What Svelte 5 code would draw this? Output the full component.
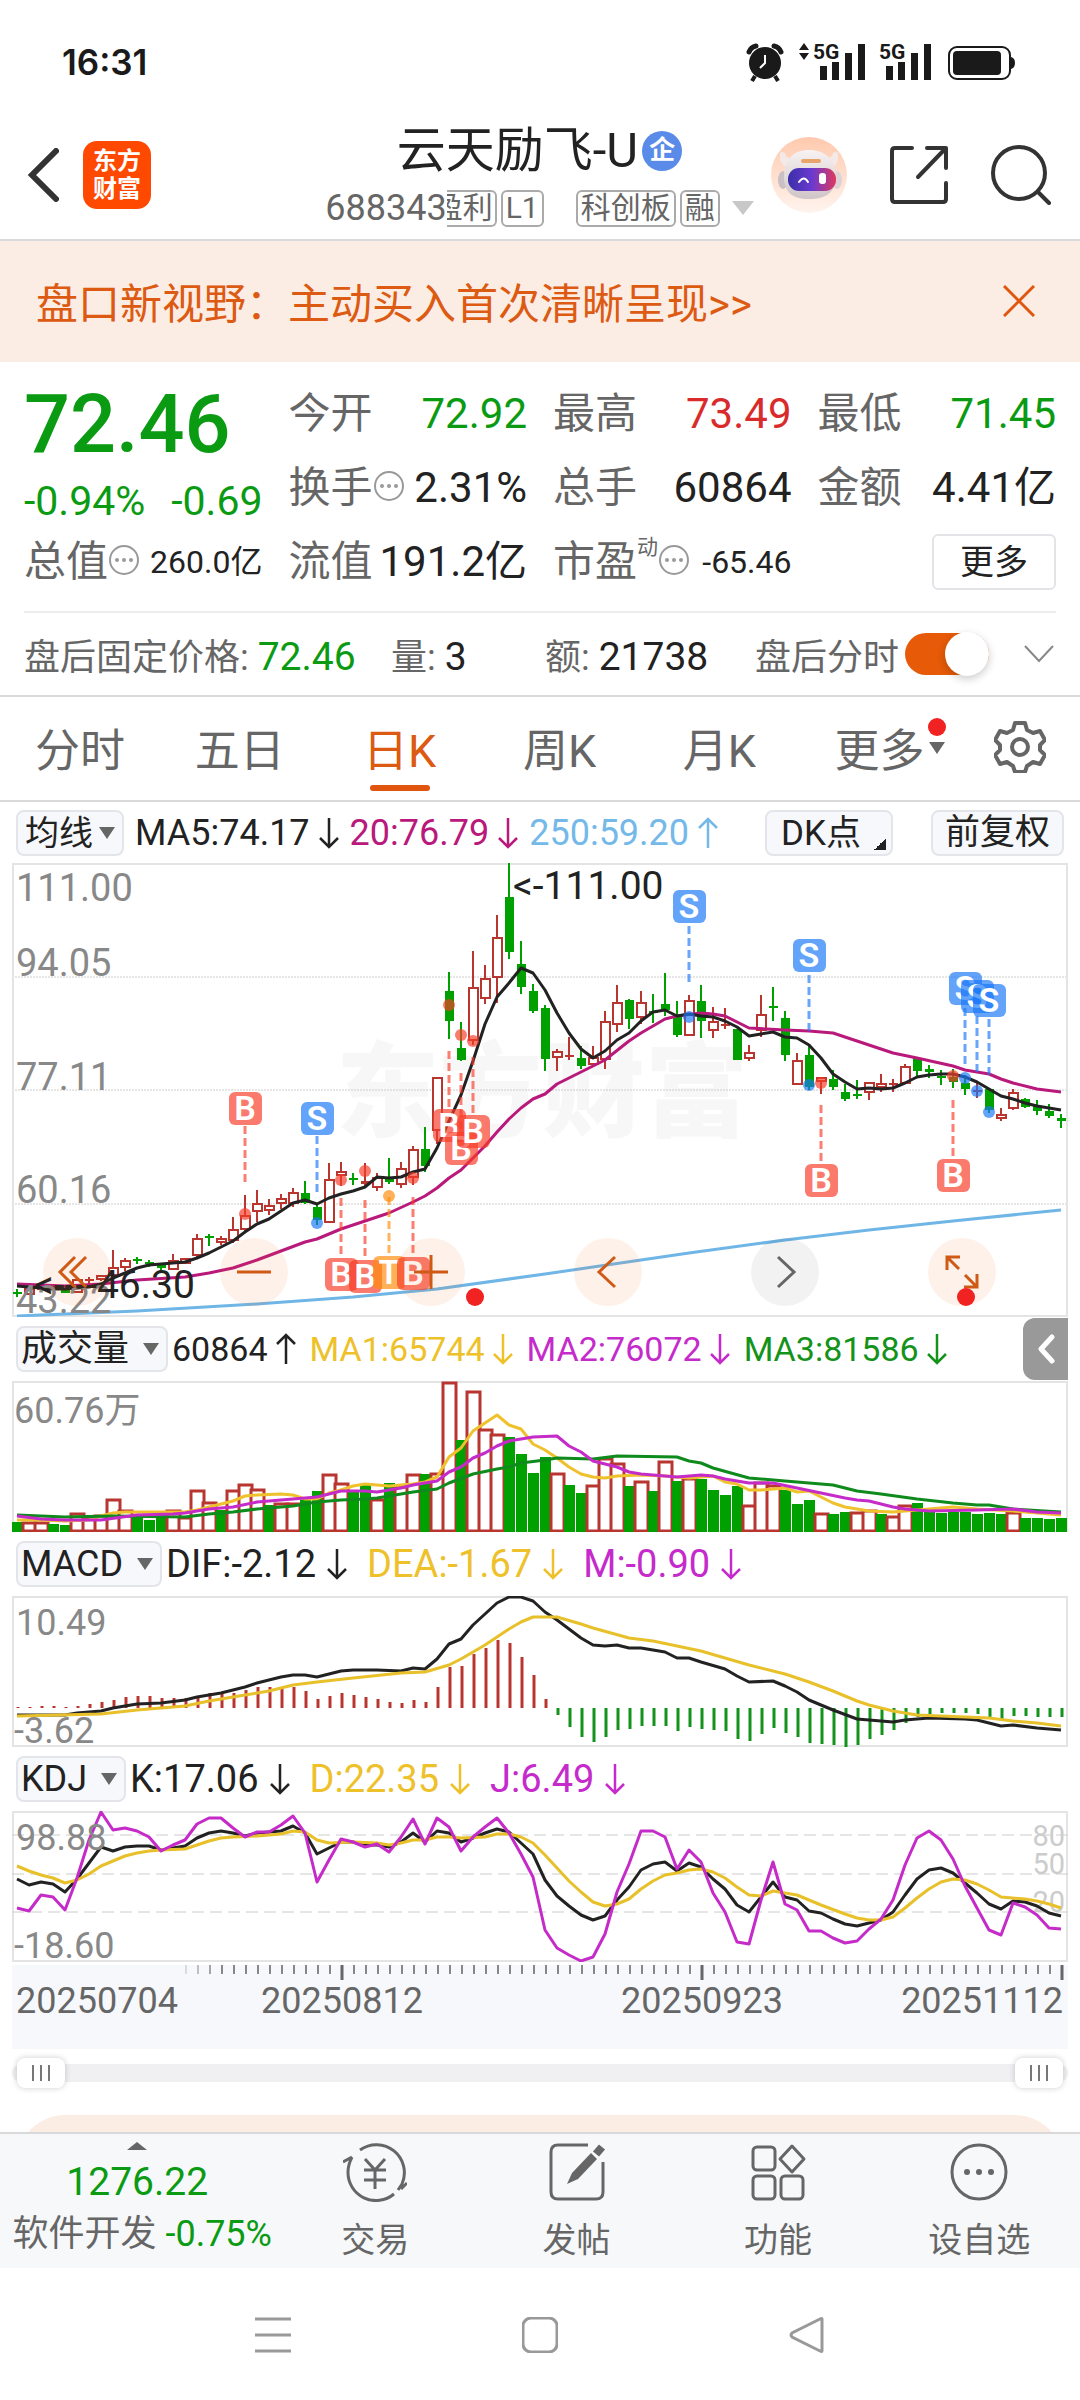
<script lang="ts">
	const STEP = 12;
	const x = (i: number) => 5 + STEP * i;

	// [colour, high, body top, body bottom, low] in chart units from the top edge
	const candles: [string, number, number, number, number][] = [
		['g', 426, 429, 431, 434], ['r', 425, 425, 432, 432], ['r', 423, 424, 427, 428], ['g', 421, 422, 424, 425],
		['g', 425, 426, 430, 430], ['r', 415, 416, 430, 430], ['r', 414, 416, 418, 423], ['r', 412, 412, 417, 418],
		['r', 387, 404, 413, 415], ['r', 395, 397, 405, 408], ['g', 394, 396, 398, 401], ['g', 397, 399, 401, 404],
		['g', 400, 402, 405, 408], ['r', 391, 397, 407, 407], ['r', 395, 395, 401, 401], ['r', 371, 375, 393, 395],
		['g', 371, 373, 375, 383], ['r', 373, 375, 380, 382], ['r', 354, 366, 378, 380], ['r', 332, 352, 367, 368],
		['r', 327, 340, 349, 359], ['r', 336, 342, 348, 352], ['r', 331, 335, 341, 346], ['r', 325, 329, 341, 344],
		['g', 318, 330, 340, 341], ['g', 342, 344, 357, 362], ['r', 300, 316, 360, 360], ['r', 299, 308, 313, 323],
		['g', 310, 315, 317, 322], ['r', 300, 318, 321, 325], ['r', 310, 314, 325, 328], ['g', 295, 315, 319, 321],
		['r', 299, 305, 322, 325], ['r', 283, 286, 315, 322], ['g', 264, 286, 303, 309], ['r', 214, 214, 268, 281],
		['g', 109, 128, 158, 176], ['g', 159, 185, 197, 198], ['r', 88, 124, 178, 182], ['r', 102, 115, 136, 141],
		['r', 52, 74, 115, 140], ['g', 0, 34, 89, 96], ['g', 78, 101, 124, 131], ['g', 121, 128, 148, 150],
		['g', 142, 145, 196, 208], ['r', 186, 188, 195, 208], ['r', 174, 192, 194, 197], ['g', 183, 195, 203, 206],
		['r', 183, 194, 202, 203], ['r', 148, 158, 197, 206], ['r', 122, 139, 162, 169], ['g', 136, 137, 156, 166],
		['r', 128, 139, 155, 161], ['g', 131, 148, 150, 160], ['g', 110, 141, 147, 153], ['g', 138, 153, 172, 174],
		['r', 132, 137, 173, 173], ['g', 122, 138, 158, 175], ['r', 144, 158, 168, 175], ['r', 145, 161, 163, 166],
		['g', 166, 166, 197, 197], ['r', 182, 189, 196, 198], ['r', 132, 151, 168, 174], ['g', 124, 143, 145, 158],
		['g', 148, 155, 192, 198], ['r', 190, 197, 222, 222], ['g', 182, 192, 224, 227], ['r', 214, 214, 219, 231],
		['g', 207, 216, 224, 227], ['g', 221, 229, 236, 238], ['g', 217, 231, 233, 236], ['r', 219, 219, 230, 237],
		['r', 211, 220, 225, 229], ['r', 216, 220, 222, 229], ['r', 201, 203, 221, 221], ['g', 194, 195, 208, 214],
		['g', 202, 206, 209, 215], ['g', 207, 213, 215, 222], ['g', 206, 214, 219, 225], ['g', 212, 220, 226, 232],
		['r', 220, 227, 229, 235], ['g', 225, 226, 247, 250], ['r', 245, 251, 256, 258], ['r', 226, 229, 246, 247],
		['g', 235, 236, 244, 245], ['g', 237, 243, 248, 252], ['g', 241, 248, 253, 255], ['g', 251, 255, 258, 265]
	];

	const ma5 = [
		423, 424, 425, 426, 426, 425, 424, 421, 415, 410, 405, 402, 401, 400, 399, 395, 390, 384, 378, 369, 361, 356,
		348, 340, 337, 341, 335, 331, 328, 324, 314, 315, 314, 309, 306, 285, 258, 232, 198, 161, 134, 120, 105, 110,
		127, 150, 170, 186, 195, 188, 177, 170, 158, 149, 147, 153, 151, 153, 154, 158, 164, 173, 171, 169, 174, 175,
		182, 195, 211, 219, 226, 225, 226, 225, 220, 214, 212, 211, 211, 214, 219, 226, 233, 236, 240, 243, 245, 247
	];
	const ma20 =
		'0,421 4,423 7,421 10,417 14,414 16,410 18,405 20,397 22,388 24,379 25,376 27,366 29,358 31,350 33,339 34,333 35,325 36,315 37,307 38,295 39,283 40,269 41,256 42,245 43,236 44,231 45,221 47,209 49,197 51,178 52,170 54,156 55,153 57,150 58,151 59,153 61,165 64,167 66,168 68,170 70,178 73,190 75,195 78,203 79,207 80,209 81,211 82,216 83,220 85,226 87,229';
	const ma250 = '0,453 10,448 20,441 28,434 35,426 44,411 56,390 64,377 71,367 78,358 87,347';

	// buy, sell and trade flags: bar, label, flag centre, dot, dash start
	const flags = [
		{ i: 19, t: 'B', y: 245, dot: 351, dash: 263 },
		{ i: 25, t: 'S', y: 255, dot: 360, dash: 273 },
		{ i: 27, t: 'B', y: 411, dot: 317, dash: 335 },
		{ i: 29, t: 'B', y: 413, dot: 308, dash: 337 },
		{ i: 31, t: 'T', y: 409, dot: 333, dash: 334 },
		{ i: 33, t: 'B', y: 410, dot: 315, dash: 334 },
		{ i: 36, t: 'B', y: 262, dot: 142, dash: 188 },
		{ i: 37, t: 'B', y: 285, dot: 172, dash: 210 },
		{ i: 38, t: 'B', y: 268, dot: 178, dash: 194 },
		{ i: 56, t: 'S', y: 43, dot: 154, dash: 63 },
		{ i: 66, t: 'S', y: 92, dot: 222, dash: 112 },
		{ i: 67, t: 'B', y: 317, dot: 220, dash: 242 },
		{ i: 78, t: 'B', y: 312, dot: 213, dash: 237 },
		{ i: 79, t: 'S', y: 125, dot: 215, dash: 145 },
		{ i: 80, t: 'S', y: 133, dot: 228, dash: 153 },
		{ i: 81, t: 'S', y: 137, dot: 249, dash: 156 }
	];
	const flagColor: Record<string, string> = { B: '#f83c28', S: '#1a77f8', T: '#ff8c0a' };

	const volumes = [
		10, 10, 10, 8, 7, 19, 14, 17, 33, 22, 16, 12, 17, 22, 15, 42, 30, 22, 42, 48, 43, 27, 29, 29, 32, 41, 58, 49,
		41, 48, 33, 49, 46, 58, 58, 59, 150, 92, 141, 103, 98, 95, 78, 59, 75, 59, 47, 39, 47, 74, 69, 46, 51, 41, 71,
		51, 54, 53, 42, 37, 46, 27, 50, 47, 42, 28, 32, 19, 18, 20, 20, 22, 18, 16, 27, 29, 21, 19, 20, 20, 18, 19, 18,
		20, 14, 14, 13, 14
	];
	const volColors =
		'grrggrrrrrgggrrrrgrrrgrrggrrggrgrrgrrgrrrggggrggrrrgrgrgrgggg' + 'rrrgggrggrrgrrgggggggg' + 'rgggg';
	const volMa1 =
		'0,139 2,139 4,140 6,139 7,135 8,132 9,131 12,131 14,131 15,129 16,126 17,123 18,120 19,115 20,114 22,113 23,114 24,118 25,118 26,112 27,109 28,105 29,103 30,104 31,105 32,104 33,103 34,101 35,96 36,76 37,67 38,50 39,42 40,34 41,44 42,48 43,63 44,69 45,77 46,86 47,93 48,96 49,97 50,95 52,94 54,95 56,97 58,95 59,101 60,103 61,109 62,109 64,107 65,111 66,110 67,116 68,122 69,126 71,130 73,131 75,129 78,126 80,128 83,130 85,132 87,134';
	const volMa2 =
		'0,135 2,138 4,139 7,139 10,134 13,133 14,132 16,128 18,126 20,121 22,119 24,117 25,116 26,113 27,110 29,110 30,111 32,107 33,104 35,100 36,91 37,86 38,77 39,72 40,65 41,60 42,58 43,56 45,55 46,65 47,71 48,80 50,86 51,91 52,93 54,95 55,96 57,94 58,95 59,98 61,102 63,102 65,107 67,112 69,117 70,119 71,120 73,126 74,128 76,130 80,129 83,128 85,131 87,132';
	const volMa3 =
		'0,134 4,136 8,135 14,136 16,133 18,131 20,128 23,125 25,121 27,119 29,118 30,117 33,111 35,108 36,102 38,93 40,88 41,86 42,82 44,79 45,77 48,78 50,75 55,76 56,80 57,82 58,87 61,97 64,100 68,104 70,110 72,113 75,118 78,122 80,124 81,124 83,128 87,131';

	const macd = [
		1, 1, 2, 2, 1, 2, 4, 6, 8, 11, 12, 12, 10, 10, 10, 12, 15, 15, 15, 18, 21, 21, 21, 21, 17, 9, 12, 15, 13, 11,
		9, 6, 5, 8, 6, 21, 41, 42, 54, 60, 68, 65, 51, 33, 9, -7, -19, -29, -34, -29, -22, -21, -18, -18, -18, -23, -19,
		-21, -22, -23, -31, -33, -26, -20, -25, -29, -35, -36, -37, -39, -37, -31, -27, -22, -15, -9, -6, -5, -5, -5,
		-6, -9, -11, -8, -8, -9, -9, -9
	];
	const dif =
		'0,119 4,119 5,117 7,115 8,112 10,108 12,107 14,104 15,101 16,99 17,97 19,91 20,87 22,81 23,79 24,79 25,81 26,78 27,75 28,74 30,74 32,75 33,72 34,73 35,63 36,48 37,43 38,29 40,7 41,1 42,1 43,5 44,16 45,24 47,42 48,49 49,50 50,49 51,52 52,52 54,56 55,62 56,62 57,66 59,73 60,80 61,86 63,85 64,90 65,96 66,104 68,114 70,123 73,126 74,124 76,122 79,123 80,124 82,130 83,129 85,132 87,134';
	const dea =
		'0,120 7,118 10,114 14,110 16,105 19,99 21,95 23,89 25,86 28,82 32,77 34,76 36,69 37,63 39,49 41,33 42,26 43,21 44,21 45,21 47,28 48,32 51,42 53,45 55,50 57,55 59,62 61,69 64,78 66,86 68,95 70,105 71,109 73,115 75,119 79,121 81,122 83,125 85,127 87,130';

	const kLine = [
		68, 74, 71, 73, 81, 68, 52, 36, 40, 36, 35, 35, 39, 37, 35, 27, 22, 20, 22, 25, 22, 21, 20, 15, 22, 43, 37, 31,
		31, 34, 34, 36, 31, 22, 31, 20, 22, 31, 27, 22, 18, 21, 32, 43, 69, 85, 95, 104, 109, 105, 89, 76, 59, 53, 51,
		60, 52, 56, 68, 78, 94, 101, 86, 71, 86, 89, 100, 102, 108, 113, 115, 112, 109, 101, 84, 68, 59, 57, 62, 72,
		82, 93, 98, 90, 91, 95, 102, 105
	];
	const dLine =
		'0,55 1,60 2,64 3,67 4,72 5,69 6,63 7,55 8,50 9,45 10,42 11,40 12,39 14,38 15,34 16,30 17,27 18,26 20,25 22,23 23,20 24,21 25,29 26,32 28,31 30,32 31,34 32,32 33,29 34,29 35,26 36,26 37,27 39,26 40,23 41,23 42,26 43,32 44,44 45,57 46,70 47,81 48,91 49,95 50,93 51,88 52,78 53,70 54,64 55,62 56,59 57,58 58,61 59,67 60,76 61,84 62,85 63,80 65,84 67,94 69,103 70,107 71,109 72,109 73,106 74,97 75,87 76,78 77,71 78,68 79,69 80,73 81,79 82,86 84,88 85,90 86,93 87,97';
	const jLine = [
		97, 100, 84, 86, 99, 67, 29, 1, 19, 17, 20, 26, 40, 34, 29, 13, 7, 7, 17, 26, 21, 21, 14, 5, 22, 71, 49, 28, 31,
		36, 33, 41, 26, 8, 33, 7, 16, 40, 26, 16, 7, 22, 43, 66, 119, 137, 144, 150, 146, 123, 81, 53, 20, 20, 26, 58,
		39, 51, 82, 101, 131, 133, 89, 51, 93, 99, 120, 120, 127, 132, 130, 118, 108, 89, 54, 27, 20, 29, 48, 75, 97,
		119, 124, 92, 96, 104, 117, 118
	];

	const dense = (values: number[]) => values.map((v, i) => `${x(i)},${v}`).join(' ');
	const sparse = (pairs: string) =>
		pairs
			.split(' ')
			.map((p) => p.split(',').map(Number))
			.map(([i, v]) => `${x(i)},${v}`)
			.join(' ');

	const ticks = Array.from({ length: 74 }, (_, n) => n + 14);
	const tabs = ['分时', '五日', '日K', '周K', '月K'];
	let activeTab = $state('日K');
	let afterHours = $state(true);
	let from = $state(0);
	let to = $state(100);
</script>

{#snippet arrow(up: boolean)}
	<svg class="arrow" viewBox="0 0 20 32" width="20" height="32" aria-hidden="true">
		<path d={up ? 'M10 31V2M1 11l9-9 9 9' : 'M10 1v29M1 21l9 9 9-9'} fill="none" stroke="currentColor" stroke-width="2.5" />
	</svg>
{/snippet}

{#snippet info()}
	<svg class="info" viewBox="0 0 32 32" width="32" height="32" aria-hidden="true">
		<circle cx="16" cy="16" r="14" fill="none" stroke="#999" stroke-width="2" />
		<g fill="#999"><circle cx="9" cy="16" r="2" /><circle cx="16" cy="16" r="2" /><circle cx="23" cy="16" r="2" /></g>
	</svg>
{/snippet}

{#snippet picker(name: string, label: string)}
	<span class="picker">
		<select aria-label={label}><option>{name}</option></select>
		<i class="caret"></i>
	</span>
{/snippet}

<div class="app">
	<div class="status">
		<span>16:31</span>
		<svg viewBox="744 40 272 44" width="272" height="44" fill="#1a1a1a" aria-hidden="true">
			<circle cx="765" cy="63" r="16" />
			<path d="M749 52q2-5 7-6M781 52q-2-5-7-6" fill="none" stroke="#1a1a1a" stroke-width="5" stroke-linecap="round" />
			<path d="M755 76l-3 5M775 76l3 5" stroke="#1a1a1a" stroke-width="4" />
			<path d="M765 55v8l-5 5" stroke="#fff" stroke-width="2" fill="none" />
			<path d="M799 50l5-7 5 7zM799 53l5 7 5-7z" />
			<text x="813" y="59" class="net">5G</text>
			<path d="M820 66h7v14h-7zM832 62h7v18h-7zM845 53h7v27h-7zM858 44h7v36h-7z" />
			<text x="879" y="59" class="net">5G</text>
			<path d="M886 66h7v14h-7zM898 62h7v18h-7zM911 53h7v27h-7zM924 44h7v36h-7z" />
			<rect x="949" y="47" width="61" height="32" rx="8" fill="none" stroke="#1a1a1a" stroke-width="2" />
			<rect x="953" y="51" width="48" height="24" rx="4" />
			<path d="M1011 57q4 1 4 6t-4 6z" />
		</svg>
	</div>

	<header class="header">
		<div class="side">
			<button class="plain" aria-label="返回">
				<svg viewBox="0 0 31 54" width="31" height="54"><path d="M28 3L4 27l24 24" fill="none" stroke="#333" stroke-width="6" stroke-linecap="round" /></svg>
			</button>
			<a class="logo" href="#home"><span>东方</span><span>财富</span></a>
		</div>
		<div class="title">
			<h1>云天励飞-U<span class="corp">企</span></h1>
			<div class="code">
				<span>688343</span><span class="tag cut">盈利</span><span class="tag">L1</span>
				<span class="tag wide">科创板</span><span class="tag">融</span>
				<svg viewBox="0 0 22 14" width="22" height="14"><path d="M0 0h22L11 14z" fill="#c8c8c8" /></svg>
			</div>
		</div>
		<div class="side right">
			<button class="plain" aria-label="助手">
				<svg viewBox="0 0 76 76" width="76" height="76">
					<defs>
						<linearGradient id="halo" x1="0" y1="0" x2="0" y2="1"><stop offset="0" stop-color="#ffc9ad" /><stop offset="1" stop-color="#fff4ee" /></linearGradient>
						<linearGradient id="visor" x1="0" y1="0" x2="1" y2="0"><stop offset="0" stop-color="#3a2fa8" /><stop offset=".5" stop-color="#6a3ad0" /><stop offset="1" stop-color="#e0385c" /></linearGradient>
						<linearGradient id="helmet" x1="0" y1="0" x2="0" y2="1"><stop offset="0" stop-color="#f8f2f2" /><stop offset="1" stop-color="#cfc5c8" /></linearGradient>
					</defs>
					<circle cx="38" cy="38" r="38" fill="url(#halo)" />
					<path d="M9 18q-1 10 7 12l8-9q-9 2-10-5q-5-3-5 2zM67 18q1 10-7 12l-8-9q9 2 10-5q5-3 5 2z" fill="#f3e9e8" />
					<ellipse cx="12" cy="43" rx="5" ry="9" fill="#c9bfc4" />
					<ellipse cx="66" cy="43" rx="5" ry="9" fill="#ddd2d5" />
					<path d="M38 13c-16 0-25 10-25 27 0 15 8 22 25 22s27-7 27-22c0-17-11-27-27-27z" fill="url(#helmet)" />
					<rect x="30" y="22" width="20" height="4" rx="2" fill="#e9a46b" />
					<rect x="17" y="31" width="48" height="23" rx="11" fill="url(#visor)" />
					<path d="M28 45q5-7 9 0" fill="none" stroke="#fff" stroke-width="2" stroke-linecap="round" />
					<rect x="48" y="36" width="7" height="11" rx="3" fill="#fff" />
				</svg>
			</button>
			<button class="plain" aria-label="分享">
				<svg viewBox="0 0 58 58" width="58" height="58" fill="none" stroke="#333" stroke-width="4" stroke-linecap="round" stroke-linejoin="round">
					<path d="M22 2H5q-3 0-3 3v48q0 3 3 3h48q3 0 3-3V37M37 2h19v20M55 3L28 31" />
				</svg>
			</button>
			<button class="plain" aria-label="搜索">
				<svg viewBox="0 0 60 60" width="60" height="60" fill="none" stroke="#333" stroke-width="4" stroke-linecap="round">
					<circle cx="28" cy="28" r="26" /><path d="M47 47l11 11" />
				</svg>
			</button>
		</div>
	</header>

	<div class="banner">
		<a href="#news">盘口新视野：主动买入首次清晰呈现&gt;&gt;</a>
		<button class="plain" aria-label="关闭">
			<svg viewBox="0 0 32 32" width="32" height="32"><path d="M1 1l30 30M31 1L1 31" stroke="#e0560f" stroke-width="3" /></svg>
		</button>
	</div>

	<section class="quote">
		<div class="price green">
			<strong>72.46</strong>
			<div><span>-0.94%</span><span>-0.69</span></div>
		</div>
		<div class="cell"><span>今开</span><b class="green">72.92</b></div>
		<div class="cell"><span>最高</span><b class="red">73.49</b></div>
		<div class="cell"><span>最低</span><b class="green">71.45</b></div>
		<div class="cell"><span>换手{@render info()}</span><b>2.31%</b></div>
		<div class="cell"><span>总手</span><b>60864</b></div>
		<div class="cell"><span>金额</span><b>4.41亿</b></div>
		<div class="cell"><span>总值{@render info()}</span><b class="small">260.0亿</b></div>
		<div class="cell"><span>流值</span><b>191.2亿</b></div>
		<div class="cell"><span>市盈<sup>动</sup>{@render info()}</span><b class="small">-65.46</b></div>
		<div class="cell end"><button class="more">更多</button></div>
	</section>

	<section class="after">
		<div>盘后固定价格: <b class="green">72.46</b></div>
		<div>量: <b>3</b></div>
		<div>额: <b>21738</b></div>
		<label>盘后分时<input type="checkbox" role="switch" bind:checked={afterHours} /></label>
		<button class="plain" aria-label="展开">
			<svg viewBox="0 0 30 18" width="30" height="18"><path d="M1 1l14 15L29 1" fill="none" stroke="#888" stroke-width="2" /></svg>
		</button>
	</section>

	<nav class="tabs">
		{#each tabs as tab}
			<button class:active={tab === activeTab} onclick={() => (activeTab = tab)}>{tab}</button>
		{/each}
		<button class="tab-more">更多<i class="dot"></i><i class="caret"></i></button>
		<button aria-label="设置">
			<svg viewBox="0 0 52 52" width="52" height="52" fill="none" stroke="#666" stroke-width="4" stroke-linejoin="round">
				<path d="M21 2h10l2 7 6 3 7-2 5 9-5 5v5l5 5-5 9-7-2-6 4-2 6H21l-2-6-6-4-7 2-5-9 5-5v-5l-5-5 5-9 7 2 6-3z" />
				<circle cx="26" cy="26" r="8" />
			</svg>
		</button>
	</nav>

	<main class="charts">
		<div class="legend ma">
			{@render picker('均线', '主图指标')}
			<span>MA5:74.17{@render arrow(false)}</span>
			<span class="pink">20:76.79{@render arrow(false)}</span>
			<span class="sky">250:59.20{@render arrow(true)}</span>
			<div class="tools">
				<button class="dk">DK点<i></i></button>
				<button>前复权</button>
			</div>
		</div>
		<div class="main-chart">
			<svg viewBox="0 0 1056 454" class="plot">
				<text x="324" y="266" class="mark">东方财富</text>
				<g class="dots"><path d="M0 114H1056M0 227H1056M0 341H1056" /></g>
				<rect class="frame" x="1" y="1" width="1054" height="452" />
				{#each candles as [c, hi, top, bottom, lo], i}
					<g class={c === 'r' ? 'up' : 'down'}>
						<path d="M{x(i)} {hi}V{top}M{x(i)} {bottom}V{lo}" />
						{#if c === 'r' && bottom - top > 3}
							<rect x={x(i) - 4} y={top + 1} width="9" height={bottom - top - 2} class="hollow" />
						{:else}
							<rect x={x(i) - 4} y={top} width="9" height={bottom - top} />
						{/if}
					</g>
				{/each}
				<polyline points={sparse(ma250)} stroke="#6fb6e6" />
				<polyline points={sparse(ma20)} stroke="#b9197b" />
				<polyline points={dense(ma5)} stroke="#222" />
				<g class="axis">
					<text x="4" y="38">111.00</text>
					<text x="4" y="113">94.05</text>
					<text x="4" y="227">77.11</text>
					<text x="4" y="340">60.16</text>
					<text x="4" y="450">43.22</text>
				</g>
				<g class="peak">
					<text x="501" y="36">&lt;-111.00</text>
					<text x="22" y="435">&lt;----46.30</text>
				</g>
				{#each flags as f}
					<g fill={flagColor[f.t]} stroke={flagColor[f.t]}>
						<path d="M{x(f.i)} {f.dash}v57" class="stem" />
						<circle cx={x(f.i)} cy={f.dot} r="6" class="spot" />
						<rect x={x(f.i) - 16} y={f.y - 16} width="33" height="33" rx="6" class="flag" />
						<text x={x(f.i)} y={f.y + 12} class="flag-text">{f.t}</text>
					</g>
				{/each}
			</svg>
			<div class="floats">
				<button aria-label="最左"><svg viewBox="0 0 40 40"><path d="M18 5L3 20l15 15M29 5L14 20l15 15" /></svg></button>
				<button aria-label="缩小"><svg viewBox="0 0 40 40"><path d="M3 20h34" /></svg></button>
				<button aria-label="放大"><svg viewBox="0 0 40 40"><path d="M3 20h34M20 3v34" /></svg><i class="dot far"></i></button>
				<button aria-label="左移"><svg viewBox="0 0 40 40"><path d="M27 5L11 20l16 15" /></svg></button>
				<button aria-label="右移" class="gray"><svg viewBox="0 0 40 40"><path d="M13 5l16 15-16 15" /></svg></button>
				<button aria-label="全屏"><svg viewBox="0 0 40 40"><path d="M5 18V5h13M5 5l12 12M23 23l12 12M22 35h13V22" /></svg><i class="dot near"></i></button>
			</div>
		</div>

		<div class="legend vol">
			{@render picker('成交量', '副图指标一')}
			<span>60864{@render arrow(true)}</span>
			<span class="gold">MA1:65744{@render arrow(false)}</span>
			<span class="violet">MA2:76072{@render arrow(false)}</span>
			<span class="leaf">MA3:81586{@render arrow(false)}</span>
			<button class="collapse" aria-label="展开侧栏">
				<svg viewBox="0 0 18 30" width="18" height="30"><path d="M15 3L4 15l11 12" fill="none" stroke="#fff" stroke-width="5" stroke-linecap="round" stroke-linejoin="round" /></svg>
			</button>
		</div>
		<svg viewBox="0 0 1056 151" class="plot">
			<rect class="frame" x="1" y="1" width="1054" height="149" />
			{#each volumes as v, i}
				{#if volColors[i] === 'r'}
					<rect x={x(i) - 6} y={152 - v} width="13" height={v - 2} class="vol-up" />
				{:else}
					<rect x={x(i) - 5} y={151 - v} width="11" height={v} fill="#00a000" />
				{/if}
			{/each}
			<polyline points={sparse(volMa1)} stroke="#efc12c" />
			<polyline points={sparse(volMa3)} stroke="#0f8a1c" />
			<polyline points={sparse(volMa2)} stroke="#c52bc9" />
			<text x="2" y="42" class="axis sub">60.76万</text>
		</svg>

		<div class="legend osc">
			{@render picker('MACD', '副图指标二')}
			<span>DIF:-2.12{@render arrow(false)}</span>
			<span class="gold">DEA:-1.67{@render arrow(false)}</span>
			<span class="violet">M:-0.90{@render arrow(false)}</span>
		</div>
		<svg viewBox="0 0 1056 151" class="plot">
			<rect class="frame" x="1" y="1" width="1054" height="149" />
			{#each macd as m, i}
				<path d="M{x(i) + 1} 112v{-m}" stroke={m > 0 ? '#b83530' : '#14931a'} stroke-width="3" />
			{/each}
			<polyline points={sparse(dif)} stroke="#222" />
			<polyline points={sparse(dea)} stroke="#e8c02a" />
			<text x="4" y="39" class="axis sub">10.49</text>
			<text x="2" y="147" class="axis sub">-3.62</text>
		</svg>

		<div class="legend osc">
			{@render picker('KDJ', '副图指标三')}
			<span>K:17.06{@render arrow(false)}</span>
			<span class="gold">D:22.35{@render arrow(false)}</span>
			<span class="violet">J:6.49{@render arrow(false)}</span>
		</div>
		<svg viewBox="0 0 1056 151" class="plot">
			<rect class="frame" x="1" y="1" width="1054" height="149" />
			<path d="M0 24H1056M0 63H1056M0 101H1056" stroke="#ccc" stroke-width="1" stroke-dasharray="12 6" />
			<g class="level">
				<text x="1053" y="35">80</text>
				<text x="1053" y="63">50</text>
				<text x="1053" y="101">20</text>
			</g>
			<polyline points={dense(kLine)} stroke="#222" />
			<polyline points={sparse(dLine)} stroke="#e8c02a" />
			<polyline points={dense(jLine)} stroke="#c52bc9" />
			<text x="4" y="39" class="axis sub">98.88</text>
			<text x="2" y="147" class="axis sub">-18.60</text>
		</svg>

		<svg viewBox="0 0 1056 84" class="plot time">
			{#each ticks as i}
				{@const major = (i - 27) % 30 === 0}
				<path d="M{x(i) + 1} 0v{major ? 15 : 9}" stroke={major ? '#666' : '#888'} stroke-width={major ? 3 : 2} opacity={Math.min(1, (i - 13) / 4)} />
			{/each}
			<g class="date">
				<text x="4" y="48">20250704</text>
				<text x="330" y="48" text-anchor="middle">20250812</text>
				<text x="690" y="48" text-anchor="middle">20250923</text>
				<text x="1051" y="48" text-anchor="end">20251112</text>
			</g>
		</svg>

		<div class="range">
			<input type="range" aria-label="起始日期" bind:value={from} />
			<input type="range" aria-label="结束日期" bind:value={to} />
		</div>
		<div class="peek"><div></div></div>
	</main>

	<footer class="bottom">
		<a class="index" href="#sector">
			<svg viewBox="0 0 20 8" width="20" height="8"><path d="M10 0l10 8H0z" fill="#666" /></svg>
			<b class="green">1276.22</b>
			<span>软件开发 <b class="green">-0.75%</b></span>
		</a>
		<a href="#trade">
			<svg viewBox="0 0 64 60" width="64" height="60" fill="none" stroke="#666" stroke-width="3">
				<path d="M17 8a28 28 0 0 1 42 34l-4 6M58 47l6-6M51 52A28 28 0 0 1 5 30q0-7 4-15M0 20l9-5" />
				<path d="M22 17l10 11 10-11M21 28h22M21 38h22M32 28v19" />
			</svg>
			交易
		</a>
		<a href="#post">
			<svg viewBox="0 0 60 60" width="60" height="60" fill="none" stroke="#666" stroke-width="3">
				<path d="M41 3H11q-7 0-7 7v40q0 7 7 7h38q7 0 7-7V20" />
				<path d="M20 42l5-11 19-20 6 6-19 20z" fill="#666" stroke="none" />
				<path d="M49 12l6-7" stroke-width="8" />
			</svg>
			发帖
		</a>
		<a href="#tools">
			<svg viewBox="0 0 60 60" width="60" height="60" fill="none" stroke="#666" stroke-width="3" stroke-linejoin="round">
				<rect x="5" y="5" width="22" height="23" rx="4" /><rect x="5" y="34" width="22" height="23" rx="4" />
				<rect x="33" y="34" width="22" height="23" rx="4" /><path d="M44 4l12 13-12 13-12-13z" />
			</svg>
			功能
		</a>
		<a href="#watch">
			<svg viewBox="0 0 60 60" width="60" height="60">
				<circle cx="30" cy="30" r="27" fill="none" stroke="#666" stroke-width="3" />
				<g fill="#666"><circle cx="18" cy="30" r="3" /><circle cx="30" cy="30" r="3" /><circle cx="42" cy="30" r="3" /></g>
			</svg>
			设自选
		</a>
	</footer>

	<div class="system">
		<button class="plain" aria-label="菜单"><svg viewBox="0 0 36 36" width="36" height="36"><path d="M0 2h36M0 18h36M0 34h36" /></svg></button>
		<button class="plain" aria-label="主页"><svg viewBox="0 0 36 36" width="36" height="36"><rect x="1" y="1" width="34" height="34" rx="8" /></svg></button>
		<button class="plain" aria-label="后退"><svg viewBox="0 0 36 36" width="36" height="36"><path d="M33 2v32q0 1-2 0L3 20q-2-2 0-4L31 2q2-1 2 0z" /></svg></button>
	</div>
</div>

<style>
	:global(body) {
		margin: 0;
		background: #fff;
	}

	.app {
		font-family: Roboto, 'Noto Sans CJK SC', sans-serif;
		font-size: 34px;
		color: #222;
	}

	.app * {
		box-sizing: border-box;
	}

	button,
	select,
	input {
		font: inherit;
		color: inherit;
		margin: 0;
	}

	b,
	i {
		font-weight: 400;
		font-style: normal;
	}

	a {
		color: inherit;
		text-decoration: none;
	}

	svg {
		display: block;
		flex: none;
	}

	.plain {
		padding: 0;
		border: 0;
		background: none;
	}

	.green {
		color: #0a9b12;
	}
	.red {
		color: #d92b2b;
	}
	.pink {
		color: #b9197b;
	}
	.sky {
		color: #74b9e8;
	}
	.gold {
		color: #eec12a;
	}
	.violet {
		color: #c52bcb;
	}
	.leaf {
		color: #14931a;
	}

	.status {
		height: 108px;
		padding: 16px 64px 0 62px;
		display: flex;
		align-items: center;
		justify-content: space-between;
		font: 600 35px Inter, sans-serif;
		color: #1a1a1a;
	}

	.net {
		font: 700 21px Roboto, sans-serif;
	}

	.header {
		height: 133px;
		padding: 2px 29px 0 28px;
		display: grid;
		grid-template-columns: 1fr auto 1fr;
		align-items: center;
		border-bottom: 2px solid #d9d9d9;
	}

	.side {
		display: flex;
		align-items: center;
		gap: 24px;
	}

	.side.right {
		justify-content: flex-end;
		gap: 43px;
	}

	.logo {
		width: 68px;
		height: 68px;
		border-radius: 14px;
		background: #ff4800;
		color: #fff;
		font-size: 24px;
		font-weight: 700;
		line-height: 28px;
		display: flex;
		flex-direction: column;
		align-items: center;
		justify-content: center;
	}

	.title {
		display: flex;
		flex-direction: column;
		align-items: center;
		gap: 7px;
	}

	h1 {
		margin: 0;
		font-size: 49px;
		font-weight: 400;
		line-height: 60px;
		display: flex;
		align-items: center;
		gap: 4px;
	}

	.corp {
		width: 40px;
		height: 40px;
		border-radius: 50%;
		background: #5a8be8;
		color: #fff;
		font-size: 26px;
		font-weight: 700;
		line-height: 38px;
		text-align: center;
	}

	.code {
		display: flex;
		align-items: center;
		font-size: 36px;
		line-height: 40px;
		color: #666;
		white-space: nowrap;
	}

	.tag {
		height: 37px;
		padding: 0 3px;
		margin-right: 4px;
		border: 2px solid #aaa;
		border-radius: 6px;
		font-size: 30px;
		line-height: 32px;
	}

	/* the code overlaps the start of the first tag */
	.tag.cut {
		width: 50px;
		padding: 0 2px 0 0;
		border-left: 0;
		border-radius: 0 6px 6px 0;
		overflow: hidden;
		display: flex;
		justify-content: flex-end;
	}

	.tag.wide {
		margin-left: 28px;
	}

	.code svg {
		margin-left: 8px;
	}

	.banner {
		height: 121px;
		padding: 0 45px 2px 36px;
		display: flex;
		align-items: center;
		justify-content: space-between;
		background: #fcede4;
		color: #dc5a12;
		font-size: 42px;
	}

	.quote {
		margin: 0 24px;
		padding: 15px 0 12px;
		display: grid;
		grid-template-columns: repeat(4, 1fr);
		grid-auto-rows: 74px;
		column-gap: 26px;
		border-bottom: 2px solid #ececec;
	}

	.price {
		grid-row: span 2;
		display: flex;
		flex-direction: column;
		font-size: 41px;
		line-height: 56px;
	}

	.price strong {
		font-size: 81px;
		font-weight: 500;
		line-height: 96px;
	}

	.price div {
		display: flex;
		justify-content: space-between;
	}

	.cell {
		display: flex;
		align-items: center;
		justify-content: space-between;
		font-size: 42px;
		line-height: 50px;
		white-space: nowrap;
	}

	.cell span {
		display: flex;
		align-items: center;
		color: #666;
	}

	.cell sup {
		align-self: flex-start;
		font-size: 21px;
		line-height: 20px;
	}

	.info {
		margin-bottom: 4px;
	}

	.cell .small {
		font-size: 32px;
	}

	.end {
		justify-content: flex-end;
	}

	.more {
		width: 124px;
		height: 56px;
		padding: 0;
		border: 2px solid #e4e4e8;
		border-radius: 6px;
		background: #fff;
		font-size: 34px;
		line-height: 50px;
	}

	.after {
		height: 84px;
		padding: 0 26px 0 24px;
		display: grid;
		grid-template-columns: 367fr 154fr 210fr 236fr 63fr;
		align-items: center;
		justify-items: start;
		border-bottom: 2px solid #d9d9d9;
		font-size: 36px;
		color: #666;
		white-space: nowrap;
	}

	.after b {
		font-size: 39px;
	}

	.after b:not(.green) {
		color: #222;
	}

	.after label {
		display: flex;
		align-items: center;
		gap: 6px;
	}

	.after button {
		justify-self: end;
	}

	.after input {
		appearance: none;
		width: 84px;
		height: 42px;
		border-radius: 21px;
		background: #ccc;
		display: flex;
		align-items: center;
	}

	.after input::before {
		content: '';
		width: 44px;
		height: 44px;
		border-radius: 50%;
		background: #fff;
		box-shadow: 0 3px 8px rgba(0, 0, 0, 0.2);
	}

	.after input:checked {
		background: #e65a08;
		justify-content: flex-end;
	}

	.tabs {
		height: 105px;
		display: grid;
		grid-template-columns: repeat(6, 159fr) 120fr;
		border-bottom: 2px solid #d9d9d9;
	}

	.tabs button {
		position: relative;
		padding: 0 0 3px;
		border: 0;
		background: none;
		color: #666;
		font-size: 45px;
		display: flex;
		align-items: center;
		justify-content: center;
	}

	.tabs .active {
		color: #dc5a12;
	}

	.tabs .active::after {
		content: '';
		position: absolute;
		bottom: 9px;
		width: 60px;
		height: 6px;
		border-radius: 3px;
		background: #e0560f;
	}

	.dot {
		position: absolute;
		width: 18px;
		height: 18px;
		border-radius: 50%;
		background: #f02222;
	}

	.tab-more .dot {
		top: 21px;
		right: 13px;
	}

	.caret {
		position: absolute;
		border: solid transparent;
		border-width: 12px 8px 0;
		border-top-color: #666;
	}

	.tab-more .caret {
		top: 45px;
		right: 14px;
	}

	.charts {
		padding: 0 12px;
	}

	.legend {
		height: 64px;
		padding-left: 4px;
		display: flex;
		align-items: center;
		font-size: 38px;
		white-space: nowrap;
	}

	.legend > span {
		display: flex;
		align-items: center;
	}

	.legend .arrow {
		margin-left: 11px;
	}

	.legend > span + span {
		margin-left: 20px;
	}

	.legend > .picker + span {
		margin-left: 4px;
	}

	.legend.ma {
		height: 61px;
		font-size: 36px;
	}

	.legend.ma .arrow {
		margin-left: 9px;
	}

	.legend.ma > span + span {
		margin-left: 11px;
	}

	.legend.vol {
		font-size: 34px;
	}

	.legend.vol .arrow {
		margin-left: 8px;
	}

	.legend.vol > span + span {
		margin-left: 14px;
	}

	.legend.vol > .picker + span {
		margin-left: 4px;
	}

	.picker {
		position: relative;
		font-size: 36px;
	}

	.picker select {
		appearance: none;
		height: 46px;
		padding: 0 36px 0 3px;
		border: 2px solid #e4e5ea;
		border-radius: 8px;
		background: #f7f8fb;
		line-height: 42px;
	}

	.ma .picker {
		font-size: 34px;
	}

	.ma .picker select {
		padding: 0 29px 0 7px;
	}

	.picker .caret {
		right: 9px;
		pointer-events: none;
	}

	.tools {
		margin-left: auto;
		padding-right: 4px;
		display: flex;
		gap: 38px;
	}

	.tools button {
		height: 46px;
		padding: 0 12px;
		border: 2px solid #e4e5ea;
		border-radius: 8px;
		background: #f7f8fb;
		font-size: 35px;
		line-height: 40px;
	}

	.tools .dk {
		padding: 0 5px 0 14px;
		display: flex;
		align-items: flex-end;
		gap: 13px;
	}

	.dk i {
		width: 12px;
		height: 12px;
		margin-bottom: 4px;
		background: linear-gradient(135deg, transparent 50%, #222 50%);
	}

	.collapse {
		width: 45px;
		height: 62px;
		margin-left: auto;
		padding: 0;
		border: 0;
		border-radius: 12px 0 0 12px;
		background: #999;
		display: flex;
		align-items: center;
		justify-content: center;
	}

	.main-chart {
		position: relative;
	}

	.plot {
		width: 100%;
		height: auto;
	}

	.plot polyline {
		fill: none;
		stroke-width: 3;
		stroke-linejoin: round;
	}

	.frame {
		fill: none;
		stroke: #e4e4e4;
		stroke-width: 2;
	}

	.dots path {
		stroke: #ccc;
		stroke-width: 1;
		stroke-dasharray: 2 1;
	}

	.mark {
		font-size: 103px;
		font-weight: 900;
		fill: #f7f7f7;
	}

	.up path {
		stroke: #b83530;
		stroke-width: 2;
	}
	.up rect {
		fill: #b83530;
	}
	.up .hollow,
	.vol-up {
		fill: #fff;
		stroke: #b83530;
		stroke-width: 2;
	}
	.vol-up {
		stroke-width: 3;
	}
	.down path {
		stroke: #00a000;
		stroke-width: 2;
	}
	.down rect {
		fill: #00a000;
	}

	.axis {
		font-size: 38px;
		fill: #888;
	}

	.sub {
		font-size: 36px;
	}

	.peak {
		font-size: 39px;
		fill: #222;
	}

	.level {
		font-size: 29px;
		fill: #ccc;
		text-anchor: end;
	}

	.stem {
		stroke-width: 3;
		stroke-dasharray: 8 4;
		opacity: 0.65;
	}

	.spot,
	.flag {
		stroke: none;
		opacity: 0.68;
	}

	.flag-text {
		fill: #fff;
		stroke: none;
		font-size: 34px;
		font-weight: 600;
		text-anchor: middle;
	}

	.floats {
		position: absolute;
		left: 31px;
		right: 72px;
		bottom: 11px;
		display: flex;
		justify-content: space-between;
	}

	.floats button {
		position: relative;
		width: 68px;
		height: 68px;
		padding: 0;
		border: 0;
		border-radius: 50%;
		background: rgba(240, 100, 20, 0.09);
		color: #cf5a16;
		display: flex;
		align-items: center;
		justify-content: center;
	}

	.floats .gray {
		background: rgba(0, 0, 0, 0.05);
		color: #666;
	}

	.floats svg {
		width: 40px;
		height: 40px;
		fill: none;
		stroke: currentColor;
		stroke-width: 3;
	}

	.far {
		left: 69px;
		top: 50px;
	}

	.near {
		left: 29px;
		top: 50px;
	}

	.time {
		margin-top: 3px;
		background: #f7f8fb;
	}

	.date {
		font-size: 36px;
		fill: #666;
	}

	.range {
		position: relative;
		height: 18px;
		margin: 15px 0 33px;
		border-radius: 9px;
		background: #f0f0f3;
	}

	.range input {
		position: absolute;
		inset: 0 5px;
		width: calc(100% - 10px);
		height: 18px;
		appearance: none;
		background: none;
		pointer-events: none;
	}

	.range input::-webkit-slider-thumb {
		appearance: none;
		pointer-events: auto;
		width: 48px;
		height: 30px;
		border-radius: 8px;
		background:
			linear-gradient(#777, #777) 15px 7px / 2px 16px no-repeat,
			linear-gradient(#777, #777) 23px 7px / 2px 16px no-repeat,
			linear-gradient(#777, #777) 31px 7px / 2px 16px no-repeat,
			#fff;
		box-shadow: 0 0 6px rgba(0, 0, 0, 0.2);
	}

	.peek {
		height: 17px;
		margin: 0 5px;
		overflow: hidden;
	}

	.peek div {
		height: 120px;
		border-radius: 48px;
		background: #fcede4;
	}

	.bottom {
		height: 136px;
		display: grid;
		grid-template-columns: minmax(0, 274fr) repeat(4, 201fr);
		border-top: 2px solid #d9d9d9;
		background: #f7f8fa;
		color: #666;
	}

	.bottom a {
		padding-top: 8px;
		display: flex;
		flex-direction: column;
		align-items: center;
		gap: 15px;
		line-height: 46px;
	}

	.bottom .index {
		gap: 12px;
		font-size: 39px;
		line-height: 40px;
	}

	.index > span {
		padding-left: 10px;
		font-size: 36px;
		white-space: nowrap;
	}

	.system {
		height: 133px;
		padding: 0 255px;
		display: flex;
		align-items: center;
		justify-content: space-between;
	}

	.system svg {
		fill: none;
		stroke: #999;
		stroke-width: 3;
	}
</style>
